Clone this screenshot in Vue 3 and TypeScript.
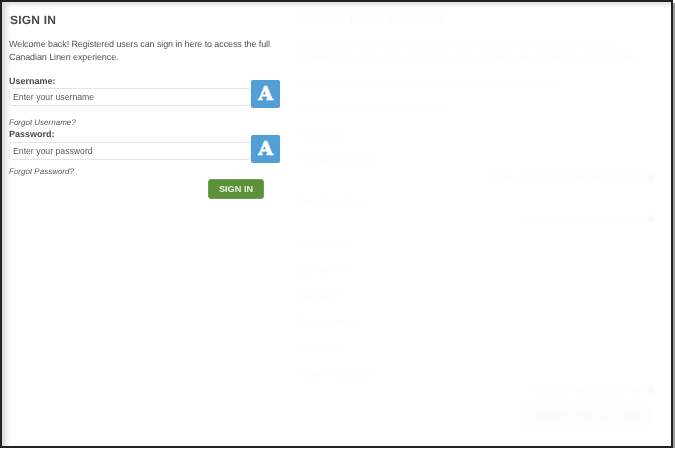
<script setup lang="ts">
interface Field {
  label: string
  hint?: string
}

const fields: Field[] = [
  { label: '* Company' },
  { label: '* Customer Number', hint: 'Where do I find my Customer Number?' },
  { label: 'Bank Postal Code', hint: 'What do I find my Postal Code?' },
  { label: 'First Name *' },
  { label: 'Last Name *' },
  { label: 'Username *' },
  { label: 'Email Address *' },
  { label: 'Password *' },
  { label: 'Retype Password *', hint: 'Password security guidelines' },
]
</script>

<template>
  <div class="frame">
    <div class="columns">
      <section class="signin">
        <h2>SIGN IN</h2>
        <p class="intro">Welcome back! Registered users can sign in here to access the full Canadian Linen experience.</p>

        <label class="label" for="user">Username:</label>
        <div class="input-row">
          <input id="user" type="text" placeholder="Enter your username" />
          <span class="badge up">A</span>
        </div>
        <a class="forgot first">Forgot Username?</a>

        <label class="label" for="pass">Password:</label>
        <div class="input-row">
          <input id="pass" type="text" placeholder="Enter your password" />
          <span class="badge">A</span>
        </div>
        <a class="forgot">Forgot Password?</a>

        <div class="actions">
          <button type="button" class="btn">SIGN IN</button>
        </div>
      </section>

      <section class="create">
        <h2>CREATE USER ACCOUNT</h2>
        <p class="intro">Need to create a User Account? Complete the form below to request it. Access to account<br />Canadian Linen online services will only be sent to your registered email address, within 24 hours.</p>
        <p class="line">Questions? <u>Click here</u> to view a short video guide on creating a user id.</p>
        <p class="line">Create an Account Following Information</p>
        <div v-for="f in fields" :key="f.label" class="field" :class="{ 'has-hint': f.hint }">
          <div class="field-label">{{ f.label }}</div>
          <div v-if="f.hint" class="hint">{{ f.hint }} <i class="dot"></i></div>
        </div>
        <div class="create-actions"><span class="ghost-btn">CREATE USER ACCOUNT</span></div>
      </section>
    </div>
  </div>
</template>

<style>
html, body {
  margin: 0;
  background: #fff;
}
</style>

<style scoped>
.frame {
  box-sizing: border-box;
  width: 673px;
  height: 448px;
  border: 2px solid #232122;
  background: #fff;
  box-shadow: 2px 3px 1px #9c9c9c, inset 0 5px 5px -3px #d8d8d8, inset 7px 0 7px -4px #cfcfcf;
  font-family: "Liberation Sans", Arial, sans-serif;
  text-rendering: geometricPrecision;
  overflow: hidden;
}

.columns {
  display: flex;
  filter: blur(0.35px);
}

h2 {
  margin: 0;
  font-size: 12px;
  line-height: 16px;
  font-weight: 700;
  letter-spacing: 0.2px;
}

.signin {
  box-sizing: border-box;
  width: 292px;
  flex: none;
  padding: 10px 0 0 7px;
  color: #4a4a4a;
}

.signin h2 {
  margin-left: 1px;
}

.signin .intro {
  margin: 10px 0 0;
  width: 270px;
  font-size: 9px;
  letter-spacing: -0.1px;
  line-height: 13px;
  color: #555;
}

.label {
  display: block;
  font-size: 9px;
  line-height: 11px;
  font-weight: 700;
  color: #4a4a4a;
}

.signin .intro + .label {
  margin-top: 12px;
}

.input-row {
  position: relative;
  width: 270px;
  height: 18px;
  margin-top: 1px;
}

.forgot.first + .label + .input-row {
  margin-top: 2px;
}

input {
  display: block;
  box-sizing: border-box;
  width: 243px;
  height: 18px;
  padding: 0 3px;
  border: 1px solid #e4e4e4;
  border-radius: 3px;
  font: 8.7px "Liberation Sans", Arial, sans-serif;
  background: #fff;
  outline: none;
}

input::placeholder {
  color: #5a5a5a;
  opacity: 1;
}

.badge {
  position: absolute;
  left: 242px;
  top: -7px;
  width: 29px;
  height: 28px;
  border-radius: 2px;
  background: #519fd6;
  color: #fff;
  font: 700 19px/28px "DejaVu Serif", serif;
  -webkit-text-stroke: 0.7px #fff;
  text-align: center;
}

.badge.up {
  top: -8px;
}

.forgot {
  display: block;
  margin-top: 7px;
  font-size: 8px;
  line-height: 10px;
  font-style: italic;
  color: #5a5a5a;
}

.forgot.first {
  margin-top: 12px;
  margin-bottom: 1px;
}

.actions {
  width: 255px;
  margin-top: 2px;
  display: flex;
  justify-content: flex-end;
}

.btn {
  width: 56px;
  height: 20px;
  padding: 0;
  border: 1px solid #6fa058;
  border-radius: 3px;
  background: #5a9139;
  color: #e8f1e2;
  font: 700 9.2px "Liberation Sans", Arial, sans-serif;
}

.create {
  flex: 1;
  min-width: 0;
  padding: 10px 16px 0 3px;
  color: #fcfcfc;
}

.create h2 {
  font-size: 11.6px;
  letter-spacing: 0.3px;
}

.create .intro {
  margin: 9px 0 0;
  font-size: 7.9px;
  line-height: 13px;
  white-space: nowrap;
}

.line {
  margin: 13px 0 0;
  font-size: 8.4px;
  line-height: 13px;
}

.field {
  margin-top: 13px;
  font-size: 9px;
  line-height: 13px;
}

.hint {
  display: flex;
  justify-content: flex-end;
  align-items: center;
  gap: 5px;
  margin-top: 3px;
  margin-bottom: 10px;
  font-size: 8.6px;
  line-height: 13px;
}

.dot {
  width: 8px;
  height: 8px;
  border-radius: 50%;
  background: #fbfbfb;
}

.create-actions {
  display: flex;
  justify-content: flex-end;
  margin-top: 9px;
  padding-right: 3px;
}

.ghost-btn {
  width: 130px;
  height: 18px;
  background: #fdfdfd;
  color: #f9f9f9;
  font-size: 9px;
  line-height: 18px;
  text-align: center;
}
</style>
